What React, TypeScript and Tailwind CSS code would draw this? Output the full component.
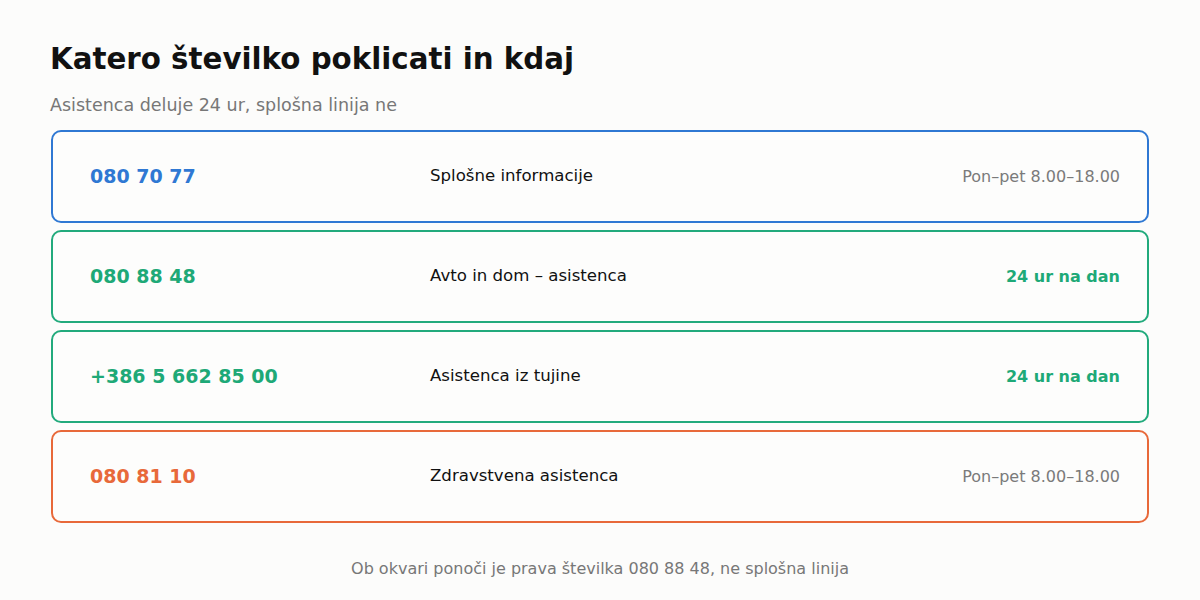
import React from "react";

const rows = [
  { num: "080 70 77", label: "Splošne informacije", time: "Pon–pet 8.00–18.00", color: "blue" },
  { num: "080 88 48", label: "Avto in dom – asistenca", time: "24 ur na dan", color: "green" },
  { num: "+386 5 662 85 00", label: "Asistenca iz tujine", time: "24 ur na dan", color: "green" },
  { num: "080 81 10", label: "Zdravstvena asistenca", time: "Pon–pet 8.00–18.00", color: "orange" },
];

const border: Record<string, string> = {
  blue: "border-[#2f78d3]",
  green: "border-[#22aa7c]",
  orange: "border-[#e8693a]",
};
const text: Record<string, string> = {
  blue: "text-[#2f78d3]",
  green: "text-[#1ea977]",
  orange: "text-[#e8693a]",
};

export default function App() {
  return (
    <div className="w-[1200px] h-[600px] bg-[#fcfcfb] px-[51px] pt-[41px] font-['DejaVu_Sans',sans-serif]">
      <h1 className="text-[29.3px] leading-[36px] font-bold text-[#111] -ml-[1px]">Katero številko poklicati in kdaj</h1>
      <p className="mt-[17px] text-[17.5px] leading-[22px] text-[#777] -ml-[1px]">Asistenca deluje 24 ur, splošna linija ne</p>
      <div className="mt-[14px] flex flex-col gap-[7px]">
        {rows.map((r) => (
          <div
            key={r.num}
            className={`h-[93px] rounded-[10px] border-2 ${border[r.color]} bg-[#fdfdfc] flex items-center pl-[37px] pr-[27px]`}
          >
            <div className={`w-[340px] text-[19px] font-bold ${text[r.color]}`}>{r.num}</div>
            <div className="flex-1 text-[16.6px] text-[#111]">{r.label}</div>
            <div
              className={
                r.color === "green"
                  ? `text-[16px] font-bold ${text[r.color]}`
                  : "text-[16px] text-[#7a7a7a]"
              }
            >
              {r.time}
            </div>
          </div>
        ))}
      </div>
      <p className="mt-[34px] text-center text-[16px] leading-[24px] text-[#777]">
        Ob okvari ponoči je prava številka 080 88 48, ne splošna linija
      </p>
    </div>
  );
}
